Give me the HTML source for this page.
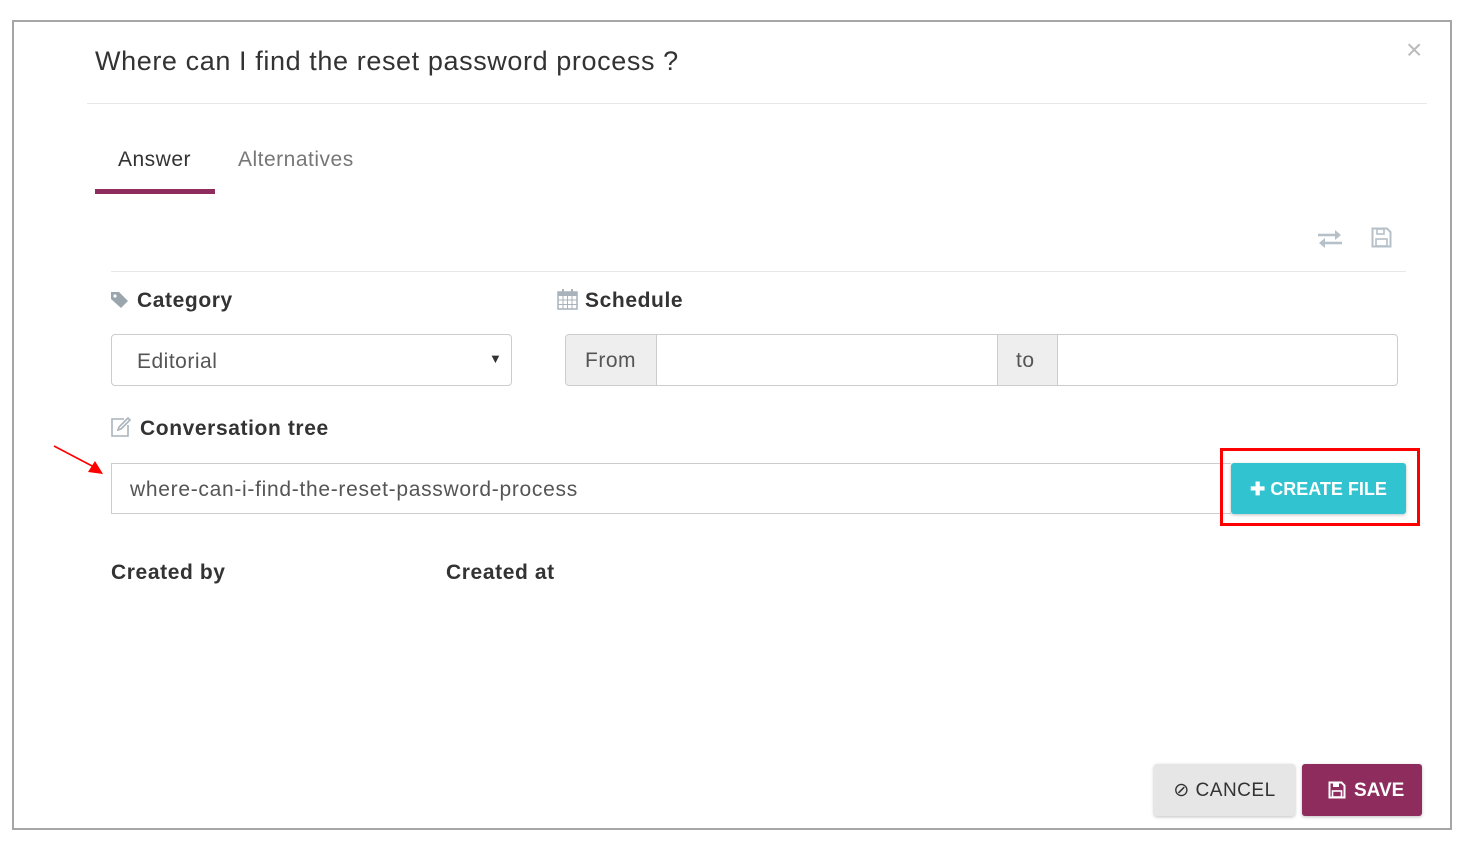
<!DOCTYPE html>
<html><head><meta charset="utf-8"><style>
*{box-sizing:border-box;margin:0;padding:0}
body{width:1470px;height:843px;background:#fff;position:relative;font-family:"Liberation Sans",sans-serif;color:#333;overflow:hidden;letter-spacing:0.5px}
.a{position:absolute}
.frame{left:12px;top:20px;width:1440px;height:810px;border:2px solid #a6a6a6}
.lbl{font-weight:bold;font-size:21px;color:#333;letter-spacing:0.6px}
.inp{border:1px solid #ccc;border-radius:4px;background:#fff}
</style></head><body>
<div class="a frame"></div>
<div class="a" style="left:95px;top:46px;font-size:27px;color:#333;letter-spacing:0.6px">Where can I find the reset password process ?</div>
<div class="a" style="left:1406px;top:34px;font-size:28px;color:#bbb">×</div>
<div class="a" style="left:87px;top:103px;width:1340px;height:1px;background:#e8e8e8"></div>
<div class="a" style="left:118px;top:148px;font-size:21px;color:#333">Answer</div>
<div class="a" style="left:238px;top:148px;font-size:21px;color:#777">Alternatives</div>
<div class="a" style="left:95px;top:189px;width:120px;height:5px;background:#8e2c5e"></div>
<svg class="a" style="left:1317px;top:228px" width="26" height="22" viewBox="0 0 26 22"><g stroke="#b5c0c8" stroke-width="2.5" fill="#b5c0c8"><line x1="1" y1="7" x2="20" y2="7"/><path d="M18 2 L24 7 L18 12Z" stroke="none"/><line x1="6" y1="15" x2="25" y2="15"/><path d="M8 10 L2 15 L8 20Z" stroke="none"/></g></svg>
<svg class="a" style="left:1371px;top:227px" width="21" height="21" viewBox="0 0 21 21"><path d="M1.5 1.5H16L19.5 5V19.5H1.5Z" fill="none" stroke="#b5c0c8" stroke-width="2"/><rect x="6" y="2" width="7" height="5" fill="none" stroke="#b5c0c8" stroke-width="1.6"/><rect x="5" y="12" width="11" height="7" fill="none" stroke="#b5c0c8" stroke-width="1.6"/></svg>
<div class="a" style="left:111px;top:271px;width:1295px;height:1px;background:#e8e8e8"></div>
<svg class="a" style="left:110px;top:291px" width="20" height="18" viewBox="0 0 20 18"><path d="M1 1H9L18 10L11 17L1 8Z" fill="#9aa5ae"/><circle cx="5" cy="5" r="1.6" fill="#fff"/></svg>
<div class="a lbl" style="left:137px;top:289px">Category</div>
<div class="a inp" style="left:111px;top:334px;width:401px;height:52px"></div>
<div class="a" style="left:137px;top:350px;font-size:21px;color:#555">Editorial</div>
<div class="a" style="left:489px;top:351px;font-size:13px;color:#333">▼</div>
<svg class="a" style="left:557px;top:289px" width="21" height="21" viewBox="0 0 21 21"><rect x="1" y="3" width="19" height="17" fill="#fff" stroke="#a8b3bc" stroke-width="1.5"/><rect x="1" y="3" width="19" height="4" fill="#a8b3bc"/><g stroke="#a8b3bc" stroke-width="1"><line x1="6" y1="7" x2="6" y2="20"/><line x1="10.5" y1="7" x2="10.5" y2="20"/><line x1="15" y1="7" x2="15" y2="20"/><line x1="1" y1="11" x2="20" y2="11"/><line x1="1" y1="15.5" x2="20" y2="15.5"/></g><rect x="5" y="0" width="2" height="5" fill="#a8b3bc"/><rect x="14" y="0" width="2" height="5" fill="#a8b3bc"/></svg>
<div class="a lbl" style="left:585px;top:289px">Schedule</div>
<div class="a inp" style="left:565px;top:334px;width:833px;height:52px;overflow:hidden">
 <div class="a" style="left:0;top:0;width:91px;height:50px;background:#eee;border-right:1px solid #ccc"></div>
 <div class="a" style="left:431px;top:0;width:61px;height:50px;background:#eee;border-left:1px solid #ccc;border-right:1px solid #ccc"></div>
</div>
<div class="a" style="left:585px;top:349px;font-size:21px;color:#555">From</div>
<div class="a" style="left:1016px;top:349px;font-size:21px;color:#555">to</div>
<svg class="a" style="left:110px;top:416px" width="22" height="22" viewBox="0 0 22 22"><path d="M14 3H2V20H18V9" fill="none" stroke="#a8b3bc" stroke-width="1.6"/><path d="M8 14L9 11L18 2L20 4L11 13Z" fill="none" stroke="#a8b3bc" stroke-width="1.6"/></svg>
<div class="a lbl" style="left:140px;top:417px">Conversation tree</div>
<svg class="a" style="left:52px;top:444px" width="54" height="32" viewBox="0 0 54 32"><line x1="2" y1="2" x2="42" y2="23" stroke="#f00" stroke-width="1.6"/><path d="M51 30L36 28L43 17Z" fill="#f00"/></svg>
<div class="a" style="left:111px;top:463px;width:1120px;height:51px;border:1px solid #ccc;border-right:none"></div>
<div class="a" style="left:130px;top:478px;font-size:21px;color:#555;letter-spacing:0.7px">where-can-i-find-the-reset-password-process</div>
<div class="a" style="left:1220px;top:448px;width:200px;height:78px;border:3px solid #f00"></div>
<div class="a" style="left:1231px;top:463px;width:175px;height:51px;background:#31c3cf;border-radius:3px;box-shadow:0 1px 3px rgba(0,0,0,.25);color:#fff;font-weight:bold;font-size:18px;line-height:52px;text-align:center;letter-spacing:0">✚ CREATE FILE</div>
<div class="a lbl" style="left:111px;top:561px">Created by</div>
<div class="a lbl" style="left:446px;top:561px">Created at</div>
<div class="a" style="left:1154px;top:764px;width:141px;height:52px;background:#e6e6e6;border-radius:3px;box-shadow:0 1px 3px rgba(0,0,0,.25);font-size:19px;line-height:54px;text-align:center;color:#333">⊘ CANCEL</div>
<div class="a" style="left:1302px;top:764px;width:120px;height:52px;background:#8e2c5e;border-radius:3px;box-shadow:0 1px 3px rgba(0,0,0,.25);font-size:19px;font-weight:bold;line-height:54px;color:#fff;padding-left:26px;letter-spacing:0">
<svg style="vertical-align:-3px;margin-right:8px" width="18" height="18" viewBox="0 0 18 18"><path d="M1.5 1.5H13.5L16.5 4.5V16.5H1.5Z" fill="none" stroke="#fff" stroke-width="2"/><rect x="5" y="2" width="6" height="4" fill="#fff"/><rect x="4.5" y="10" width="9" height="6" fill="none" stroke="#fff" stroke-width="1.6"/></svg>SAVE</div>
</body></html>
